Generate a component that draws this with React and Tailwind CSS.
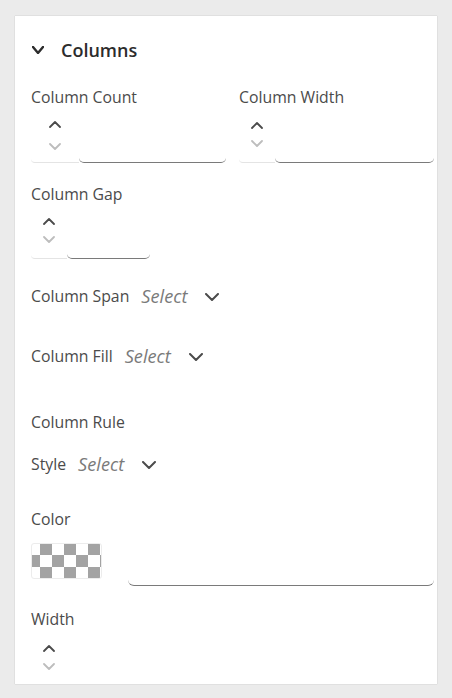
import React from "react";

const font = { fontFamily: '"Open Sans", "Noto Sans", sans-serif' };

function ChevronDown({ className = "", color = "#4b4b4b", w = 14, h = 8, sw = 2 }) {
  return (
    <svg className={className} width={w} height={h} viewBox={`0 0 ${w} ${h}`} fill="none">
      <path d={`M1 1 L${w / 2} ${h - 1} L${w - 1} 1`} stroke={color} strokeWidth={sw} strokeLinecap="round" strokeLinejoin="round" />
    </svg>
  );
}

function ChevronUp({ className = "", color = "#4b4b4b", w = 12, h = 7, sw = 1.8 }) {
  return (
    <svg className={className} width={w} height={h} viewBox={`0 0 ${w} ${h}`} fill="none">
      <path d={`M1 ${h - 1} L${w / 2} 1 L${w - 1} ${h - 1}`} stroke={color} strokeWidth={sw} strokeLinecap="round" strokeLinejoin="round" />
    </svg>
  );
}

// number field: spinner buttons on the left, underline input on the right
function NumberField({ spinW, pt, gap, height, width }) {
  return (
    <div className="flex" style={{ height, width }}>
      <div
        className="flex flex-col items-center border-b border-[#e4e4e4] rounded-bl-[4px]"
        style={{ width: spinW, paddingTop: pt, gap }}
      >
        <ChevronUp color="#4b4b4b" />
        <ChevronUp className="rotate-180" color="#bdbdbd" />
      </div>
      <div className="flex-1 border-b border-[#7a7a7a] rounded-[5px]" />
    </div>
  );
}

function Label({ children, className = "" }) {
  return <div className={`h-[20px] leading-[20px] text-[15.8px] text-[#4b4b4b] ${className}`}>{children}</div>;
}

function SelectRow({ label, className = "" }) {
  return (
    <div className={`flex items-center h-[20px] ${className}`}>
      <span className="text-[15.8px] text-[#4b4b4b]">{label}</span>
      <span className="ml-[12px] text-[18.2px] italic text-[#7a7a7a]">Select</span>
      <ChevronDown className="ml-[18px]" />
    </div>
  );
}

export default function App() {
  return (
    <div className="w-full h-[698px] bg-[#ebebeb] pt-[16px] overflow-hidden" style={font}>
      <div className="ml-[15px] w-[422px] h-[668px] bg-white shadow-[0_0_1px_rgba(0,0,0,0.25)] overflow-hidden pl-[16px] pr-[3px]">
        {/* header */}
        <div className="mt-[22px] h-[24px] flex items-center">
          <ChevronDown className="ml-[1px]" color="#2c2c2c" w={12} h={8} sw={2.4} />
          <span className="ml-[17px] text-[18px] font-semibold text-[#2c2c2c]">Columns</span>
        </div>

        {/* count / width */}
        <div className="mt-[25px] flex gap-[13px]">
          <div className="w-[195px]">
            <Label>Column Count</Label>
            <NumberField spinW={48} pt={14} gap={15} height={56} />
          </div>
          <div className="w-[195px]">
            <Label>Column Width</Label>
            <NumberField spinW={36} pt={15} gap={11} height={56} />
          </div>
        </div>

        {/* gap */}
        <Label className="mt-[21px]">Column Gap</Label>
        <NumberField spinW={36} pt={14} gap={11} height={55} width={119} />

        <SelectRow label="Column Span" className="mt-[28px]" />
        <SelectRow label="Column Fill" className="mt-[40px]" />

        <Label className="mt-[45px]">Column Rule</Label>
        <SelectRow label="Style" className="mt-[23px]" />

        <Label className="mt-[34px]">Color</Label>
        <div className="flex h-[57px]">
          <div className="mt-[14px] w-[71px] h-[36px] rounded-[3px] border border-[#ececec] bg-[repeating-conic-gradient(#a3a3a3_0_25%,#ffffff_0_50%)] bg-[length:24px_24px] bg-[position:-4px_-1px]" />
          <div className="ml-[26px] flex-1 border-b border-[#7a7a7a] rounded-[6px]" />
        </div>

        <Label className="mt-[23px]">Width</Label>
        <NumberField spinW={36} pt={16} gap={11} height={60} width={119} />
      </div>
    </div>
  );
}
